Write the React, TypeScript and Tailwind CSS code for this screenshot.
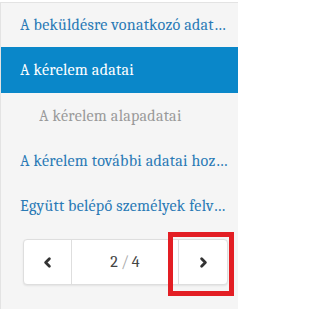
import { ChevronLeft, ChevronRight } from "lucide-react";

const items = [
  { label: "A beküldésre vonatkozó adatok megadása", kind: "link" },
  { label: "A kérelem adatai", kind: "active" },
  { label: "A kérelem alapadatai", kind: "sub" },
  { label: "A kérelem további adatai hozzáadása", kind: "link" },
  { label: "Együtt belépő személyek felvétele", kind: "link" },
];

export default function App() {
  return (
    <main className="w-[238px] h-[309px] bg-white pt-[2px] font-serif">
      <div className="h-full bg-[#f5f5f5] border-t border-l border-[#e3e3e3]">
        {/* Menu */}
        <nav className="flex flex-col text-[16px] tracking-[0.25px]">
          {items.map((item, i) => (
            <div
              key={item.label}
              className={
                item.kind === "active"
                  ? "h-[46px] flex items-center pl-[19px] pr-[10px] bg-[#0a87c9] text-white"
                  : item.kind === "sub"
                  ? "h-[45px] flex items-center pl-[38px] pr-[10px] text-[#9a9a9a]"
                  : i === 0
                  ? "h-[44px] flex items-center pl-[19px] pr-[10px] text-[#2a7ab5]"
                  : "h-[45px] flex items-center pl-[19px] pr-[10px] text-[#2a7ab5]"
              }
            >
              <span className="truncate">{item.label}</span>
            </div>
          ))}
        </nav>

        {/* Pagination */}
        <div className="pl-[22px] pr-[10px] pt-[11px]">
          <div className="relative flex h-[46px] bg-white border border-[#dedede] rounded-[4px] shadow-[0_1px_2px_rgba(0,0,0,0.08)]">
            <button className="w-[48px] flex items-center justify-center border-r border-[#dedede] text-[#333]">
              <ChevronLeft size={15} strokeWidth={4.5} />
            </button>
            <div className="flex-1 flex items-center justify-center text-[16px] text-[#444]">
              2 <span className="mx-[3px] text-[#aaa]">/</span> 4
            </div>
            <button className="w-[49px] flex items-center justify-center border-l border-[#dedede] text-[#333]">
              <ChevronRight size={15} strokeWidth={4.5} />
            </button>
            <div className="absolute right-[-7px] top-[-8px] w-[66px] h-[64px] border-[5px] border-[#e31e24] pointer-events-none" />
          </div>
        </div>
      </div>
    </main>
  );
}
